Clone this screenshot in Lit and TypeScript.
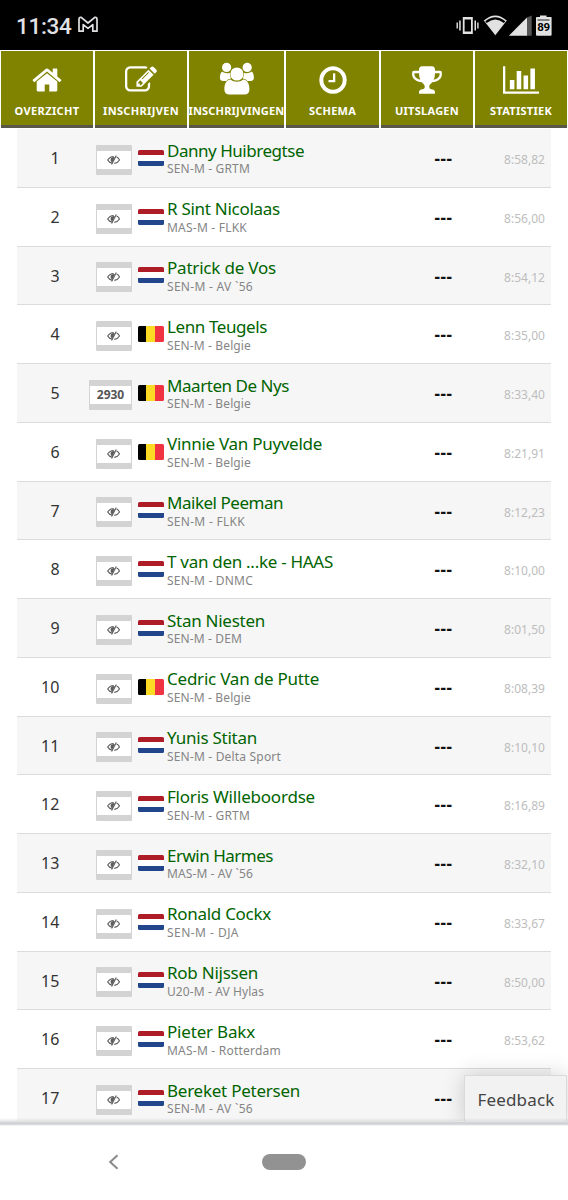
import { LitElement, html, css, svg } from "lit";
import { customElement, property } from "lit/decorators.js";

/** Text that spreads its letters so that it fills the given width. */
@customElement("fit-text")
class FitText extends LitElement {
  @property({ type: Number }) w = 0;
  @property() text = "";
  static styles = css`
    :host { display: inline-block; white-space: pre; }
    .t { display: inline-block; }
  `;
  render() {
    return html`<span class="t">${this.text}</span>`;
  }
  updated() {
    const el = this.renderRoot.querySelector(".t") as HTMLElement;
    el.style.letterSpacing = "0px";
    const natural = el.getBoundingClientRect().width;
    const gap = (this.w - natural) / this.text.length;
    el.style.letterSpacing = gap + "px";
  }
}

const HOME = svg`<svg class="ico" viewBox="0 0 1792 1792"><path d="M1472 992v480q0 26-19 45t-45 19h-384v-384h-256v384h-384q-26 0-45-19t-19-45v-480q0-1 .5-3t.5-3l575-474 575 474q1 2 1 6zm223-69l-62 74q-8 9-21 11h-3q-13 0-21-7l-692-577-692 577q-12 8-24 7-13-2-21-11l-62-74q-8-10-7-23.5t11-21.5l719-599q32-26 76-26t76 26l244 204v-195q0-14 9-23t23-9h192q14 0 23 9t9 23v408l219 182q10 8 11 21.5t-7 23.5z"/></svg>`;
const EDIT = svg`<svg class="ico" viewBox="0 0 1792 1792"><path d="M888 1184l116-116-152-152-116 116v56h96v96h56zm440-720q-16-16-33 1l-350 350q-17 17-1 33t33-1l350-350q17-17 1-33zm80 594v190q0 119-84.5 203.5t-203.5 84.5h-832q-119 0-203.5-84.5t-84.5-203.5v-832q0-119 84.5-203.5t203.5-84.5h832q63 0 117 25 15 7 18 23 3 17-9 29l-49 49q-14 14-32 8-23-6-45-6h-832q-66 0-113 47t-47 113v832q0 66 47 113t113 47h832q66 0 113-47t47-113v-126q0-13 9-22l64-64q15-15 35-7t20 29zm-96-738l288 288-672 672h-288v-288zm444 132l-92 92-288-288 92-92q28-28 68-28t68 28l152 152q28 28 28 68t-28 68z"/></svg>`;
const USERS = svg`<svg class="ico wide" viewBox="0 0 36 32"><circle cx="7.6" cy="4.4" r="4.6"/><circle cx="28.2" cy="4.4" r="4.6"/><path d="M3.2 8.6C1.6 9.4.9 12 .9 15c0 2 1.400 3 3.200 3h3.400c1.300-1.600 3-2.300 4.700-2.400-1.100-1.800-1.600-3.800-1.200-5.900-2.600 1.200-5.600.6-7.800-1.100zM32.600 8.600c1.600.8 2.300 3.400 2.300 6.400 0 2-1.400 3-3.200 3h-3.400c-1.300-1.600-3-2.300-4.700-2.400 1.100-1.800 1.600-3.800 1.200-5.900 2.600 1.200 5.600.6 7.800-1.100z"/><circle cx="17.900" cy="11" r="6.600"/><path d="M11.500 16.600c-4.100.4-6.100 4-6.100 9.900 0 3.200 1.900 5 4.900 5h15.200c3 0 4.900-1.800 4.900-5 0-5.900-2-9.500-6.100-9.900-3.700 2.900-9.100 2.900-12.800 0z"/></svg>`;
const CLOCK = svg`<svg class="ico" viewBox="0 0 1792 1792"><path d="M1024 544v448q0 14-9 23t-23 9h-320q-14 0-23-9t-9-23v-64q0-14 9-23t23-9h224v-352q0-14 9-23t23-9h64q14 0 23 9t9 23zm416 352q0-148-73-273t-198-198-273-73-273 73-198 198-73 273 73 273 198 198 273 73 273-73 198-198 73-273zm224 0q0 209-103 385.500t-279.500 279.500-385.500 103-385.500-103-279.500-279.500-103-385.500 103-385.500 279.500-279.500 385.500-103 385.500 103 279.500 279.500 103 385.500z"/></svg>`;
const TROPHY = svg`<svg class="ico" viewBox="0 0 1792 1792"><path d="M458 883q-74-162-74-371h-256v96q0 78 94.500 162t235.500 113zm1078-275v-96h-256q0 209-74 371 141-29 235.500-113t94.500-162zm128-128v128q0 71-41.500 143t-112 130-173 97.500-215.500 44.500q-42 54-95 95-38 34-52.500 72.500t-14.500 89.500q0 54 30.500 91t97.500 37q75 0 133.500 45.500t58.500 114.500v64q0 14-9 23t-23 9h-832q-14 0-23-9t-9-23v-64q0-69 58.500-114.500t133.500-45.500q67 0 97.500-37t30.500-91q0-51-14.500-89.500t-52.500-72.500q-53-41-95-95-113-5-215.500-44.500t-173-97.500-112-130-41.500-143v-128q0-40 28-68t68-28h288v-96q0-66 47-113t113-47h576q66 0 113 47t47 113v96h288q40 0 68 28t28 68z" transform="translate(64 0)"/></svg>`;
const CHART = svg`<svg class="ico chart" viewBox="0 0 2048 1792"><path d="M640 896v512H384V896h256zm384-512v1024H768V384h256zm1024 1152v128H0V128h128v1408h1920zm-640-896v768h-256V640h256zm384-384v1152h-256V256h256z"/></svg>`;

const TABS: [string, number, unknown][] = [
  ["OVERZICHT", 65, HOME],
  ["INSCHRIJVEN", 76, EDIT],
  ["INSCHRIJVINGEN", 96, USERS],
  ["SCHEMA", 47, CLOCK],
  ["UITSLAGEN", 64, TROPHY],
  ["STATISTIEK", 62, CHART],
];

/* name, name width, category, category width, country, time, bib number */
type Row = [string, number, string, number, string, string, string?];
const ROWS: Row[] = [
  ["Danny Huibregtse", 137, "SEN-M - GRTM", 83, "nl", "8:58,82"],
  ["R Sint Nicolaas", 113, "MAS-M - FLKK", 80, "nl", "8:56,00"],
  ["Patrick de Vos", 109, "SEN-M - AV `56", 86, "nl", "8:54,12"],
  ["Lenn Teugels", 100, "SEN-M - Belgie", 84, "be", "8:35,00"],
  ["Maarten De Nys", 122, "SEN-M - Belgie", 84, "be", "8:33,40", "2930"],
  ["Vinnie Van Puyvelde", 155, "SEN-M - Belgie", 84, "be", "8:21,91"],
  ["Maikel Peeman", 116, "SEN-M - FLKK", 78, "nl", "8:12,23"],
  ["T van den ...ke - HAAS", 166, "SEN-M - DNMC", 86, "nl", "8:10,00"],
  ["Stan Niesten", 98, "SEN-M - DEM", 75, "nl", "8:01,50"],
  ["Cedric Van de Putte", 152, "SEN-M - Belgie", 84, "be", "8:08,39"],
  ["Yunis Stitan", 90, "SEN-M - Delta Sport", 114, "nl", "8:10,10"],
  ["Floris Willeboordse", 148, "SEN-M - GRTM", 83, "nl", "8:16,89"],
  ["Erwin Harmes", 106, "MAS-M - AV `56", 86, "nl", "8:32,10"],
  ["Ronald Cockx", 104, "SEN-M - DJA", 72, "nl", "8:33,67"],
  ["Rob Nijssen", 91, "U20-M - AV Hylas", 97, "nl", "8:50,00"],
  ["Pieter Bakx", 88, "MAS-M - Rotterdam", 114, "nl", "8:53,62"],
  ["Bereket Petersen", 133, "SEN-M - AV `56", 86, "nl", ""],
];

const HIDDEN = svg`<svg class="eye" viewBox="0 0 13 10"><g fill="none" stroke="#5a5a5a" stroke-width="1.100"><path d="M5.300 8.200C3.300 7.800 1.500 6.600.7 5c1.200-2 3.500-3.400 6-3.500"/><path d="M9.600 2.100c1.300.6 2.300 1.600 2.900 2.900-1.100 1.900-3 3.100-5.200 3.400"/><path d="M9.300.4L4.600 9.600"/></g><path d="M7.800 2C5.200 1.700 3.400 3.100 3.600 5c.1 1.200.7 2 1.700 2.500z" fill="#5a5a5a"/></svg>`;

@customElement("app-root")
class AppRoot extends LitElement {
  static styles = css`
    :host {
      display: flex; flex-direction: column; width: 568px; height: 1200px;
      overflow: hidden; background: #fff; position: relative;
      font-family: "Noto Sans", sans-serif;
    }
    .status {
      flex: none; height: 50px; box-sizing: border-box; background: #000; color: #e2e2e6;
      display: flex; align-items: center; padding: 1px 16px 0 16px;
    }
    .clock { font: 500 22.500px/28px Roboto, sans-serif; width: 62px; white-space: nowrap; }
    .gmail { width: 20px; height: 17px; margin-top: -2px; }
    .sys { margin-left: auto; width: 98px; height: 24px; margin-top: -2px; }
    .tabs {
      flex: none; height: 79px; padding: 1px 1px 0; box-sizing: border-box;
      display: grid; grid-template-columns: 92px 92px 95px 93px 92px 92px; column-gap: 2px;
    }
    .tab {
      height: 76.500px; box-sizing: border-box; background: #808300; border-bottom: 3px solid #58574a;
      color: #fff; display: flex; flex-direction: column; align-items: center;
      padding-top: 13px; overflow: hidden;
    }
    .ico { width: 32px; height: 32px; fill: #fff; flex: none; }
    .wide { width: 36px; overflow: visible; margin-top: -1px; margin-bottom: 1px; }
    .chart { width: 36.500px; }
    .label { font-size: 11px; font-weight: 700; line-height: 16px; margin-top: 7px; }
    .list { flex: none; height: 992px; margin: 0 17px; overflow: hidden; }
    .row {
      height: 58.750px; box-sizing: border-box; border-bottom: 1.500px solid #dcdcdc;
      display: flex; background: #fff; position: relative;
    }
    .row:nth-child(odd) { background: #f6f6f6; }
    .num { width: 75px; box-sizing: border-box; padding-right: 32.500px; text-align: right; font-size: 16px; line-height: 58.500px; color: #333; }
    .bibcell { width: 40px; display: flex; justify-content: flex-end; padding-top: 15.800px; }
    .bib {
      height: 30px; width: 36.500px; box-sizing: border-box; background: #fff; flex: none;
      border: 1px solid #d3d3d3; border-width: 6px 1px; border-radius: 1px;
      display: flex; align-items: center; justify-content: center;
      font-size: 12px; font-weight: 700; color: #555; line-height: 18px;
    }
    .bib.no { width: 43px; }
    .eye { width: 13px; height: 10px; }
    .flag {
      width: 25.500px; height: 16px; margin: 20.800px 3.500px 0 6px; border-radius: 1.500px; flex: none;
    }
    .nl { background: linear-gradient(#ae1c28 0 5.300px, #fff 5.300px 10.700px, #21468b 10.700px); }
    .be { background: linear-gradient(90deg, #000 0 8.500px, #fdda24 8.500px 17px, #ef3340 17px); }
    .who { width: 228px; padding-top: 9.700px; flex: none; white-space: nowrap; }
    .name { font-size: 17px; line-height: 23px; height: 22.600px; color: #006400; }
    .cat { font-size: 12px; line-height: 15px; height: 15px; color: #858585; }
    .res { width: 80px; box-sizing: border-box; padding-left: 39.500px; flex: none; }
    .mark { font-size: 17px; font-weight: 700; line-height: 59px; color: #111; }
    .time { margin-left: auto; padding-right: 6px; font-size: 12px; line-height: 62.500px; color: #bdbdbd; }
    .edge {
      position: absolute; left: 0; top: 1118px; width: 568px; height: 8px; z-index: 3;
      background: linear-gradient(rgba(200,200,205,0), rgba(200,200,205,.5) 45%, #cdced2 60%, #d6d7da 80%, #fff);
    }
    .feedback {
      position: absolute; left: 464px; top: 1075px; width: 103px; height: 50px; box-sizing: border-box;
      background: #f2f2f2; border: 1px solid #dadada; border-bottom: 0; color: #444;
      font-size: 17px; line-height: 47px; padding-left: 12.500px; z-index: 2;
      box-shadow: 0 0 22px rgba(0,0,0,.18);
    }
    .nav {
      flex: none; height: 79px; background: #fff; position: relative; z-index: 2; display: flex;
      align-items: center; padding-top: 3px; box-sizing: border-box; margin-top: auto;
    }
    .back { width: 12px; height: 16px; margin-left: 107px; }
    .pill { width: 44px; height: 16px; border-radius: 8px; background: #929292; margin-left: 143px; }
  `;
  render() {
    return html`
      <div class="status">
        <div class="clock"><fit-text .w=${55.5} text="11:34"></fit-text></div>
        <svg class="gmail" viewBox="0 0 20 17"><path d="M1 15.200V3.200Q1 1 3.200 1.400L10 7l6.800-5.600Q19 1 19 3.200v12h-4.200V8.600L10 12.400 5.200 8.600v6.600z" fill="none" stroke="#e2e2e6" stroke-width="1.700" stroke-linejoin="round"/></svg>
        <svg class="sys" viewBox="0 0 98 24">
          <g fill="#e2e2e2">
            <path d="M2.500 9.500h1.400v6H2.500zM5.200 7.500h1.500v10H5.200zM20.500 7.500H22v10h-1.500zM23.200 9.500h1.400v6h-1.400z"/>
            <path d="M8.800 4h10v17h-10zM10.600 6.600v11.800H17V6.600z" fill-rule="evenodd"/>
            <path d="M41.300 22.200L29.800 7.600Q41.300-2.800 52.800 7.600z"/>
            <path d="M54.800 22.800L73 4.600v18.200z"/>
            <path d="M73 22.800V4.600L77.700 2.500v20.300z" fill="#555"/>
            <path d="M86 2.500h6.500V4H97q.6 0 .6.800v17q0 1-1 1H83q-1 0-1-1v-17q0-.8.800-.8H86z"/>
          </g>
          <path d="M32 9.200Q41.300 1.600 50.600 9.200" fill="none" stroke="#000" stroke-width="2.200"/>
          <path d="M83.500 7h12" stroke="#222" stroke-width="1"/>
          <text x="83.200" y="18" font-family="Roboto" font-weight="700" font-size="11.500" fill="#000" textLength="13">89</text>
        </svg>
      </div>
      <div class="tabs">
        ${TABS.map(([t, w, icon]) => html`<div class="tab">${icon}<fit-text class="label" .w=${w} .text=${t}></fit-text></div>`)}
      </div>
      <div class="list">
        ${ROWS.map(([name, nw, cat, cw, flag, time, bib], i) => html`
          <div class="row">
            <div class="num"><fit-text .w=${i < 9 ? 9 : 18.5} .text=${String(i + 1)}></fit-text></div>
            <div class="bibcell"><div class="bib ${bib ? "no" : ""}">${bib ?? HIDDEN}</div></div>
            <div class="flag ${flag}"></div>
            <div class="who">
              <div class="name"><fit-text .w=${nw} .text=${name}></fit-text></div>
              <div class="cat"><fit-text .w=${cw} .text=${cat}></fit-text></div>
            </div>
            <div class="res"><div class="mark"><fit-text .w=${18} text="---"></fit-text></div></div>
            <div class="time">${time ? html`<fit-text .w=${41} .text=${time}></fit-text>` : ""}</div>
          </div>`)}
      </div>
      <div class="feedback"><fit-text .w=${77} text="Feedback"></fit-text></div>
      <div class="edge"></div>
      <div class="nav">
        <svg class="back" viewBox="0 0 12 16"><path d="M10.500 1.200L3.200 8l7.300 6.800" fill="none" stroke="#8a8a8a" stroke-width="2"/></svg>
        <div class="pill"></div>
      </div>
    `;
  }
}
